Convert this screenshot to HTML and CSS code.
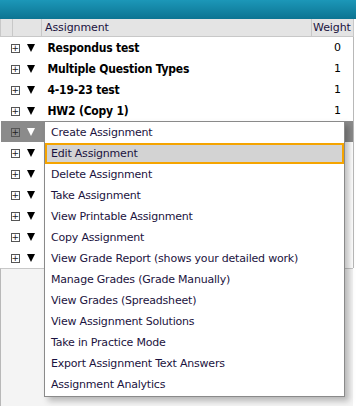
FILE: index.html
```html
<!DOCTYPE html>
<html lang="en">
<head>
    <title>Assignments</title>
    <link rel="stylesheet" href="styles.css">
</head>
<body>
    <div class="panel">
        <div class="titlebar"></div>
        <table class="grid">
            <colgroup>
                <col class="w1">
                <col class="w2">
                <col>
                <col class="w4">
            </colgroup>
            <tr class="head">
                <th></th>
                <th></th>
                <th class="c3">Assignment</th>
                <th class="c4">Weight</th>
            </tr>
            <tr>
                <td colspan="2" class="icons"><span class="plus">+</span><span class="tri"></span></td>
                <td class="name">Respondus test</td>
                <td class="num">0</td>
            </tr>
            <tr>
                <td colspan="2" class="icons"><span class="plus">+</span><span class="tri"></span></td>
                <td class="name">Multiple Question Types</td>
                <td class="num">1</td>
            </tr>
            <tr>
                <td colspan="2" class="icons"><span class="plus">+</span><span class="tri"></span></td>
                <td class="name">4-19-23 test</td>
                <td class="num">1</td>
            </tr>
            <tr>
                <td colspan="2" class="icons"><span class="plus">+</span><span class="tri"></span></td>
                <td class="name">HW2 (Copy 1)</td>
                <td class="num">1</td>
            </tr>
            <tr class="active">
                <td colspan="2" class="icons"><span class="plus">+</span><span class="tri"></span></td>
                <td class="name"></td>
                <td class="num"></td>
            </tr>
            <tr><td colspan="2" class="icons"><span class="plus">+</span><span class="tri"></span></td><td></td><td></td></tr>
            <tr><td colspan="2" class="icons"><span class="plus">+</span><span class="tri"></span></td><td></td><td></td></tr>
            <tr><td colspan="2" class="icons"><span class="plus">+</span><span class="tri"></span></td><td></td><td></td></tr>
            <tr><td colspan="2" class="icons"><span class="plus">+</span><span class="tri"></span></td><td></td><td></td></tr>
            <tr><td colspan="2" class="icons"><span class="plus">+</span><span class="tri"></span></td><td></td><td></td></tr>
            <tr><td colspan="2" class="icons"><span class="plus">+</span><span class="tri"></span></td><td></td><td></td></tr>
        </table>
        <div class="filler"></div>

        <ul class="menu">
            <li>Create Assignment</li>
            <li class="selected">Edit Assignment</li>
            <li>Delete Assignment</li>
            <li>Take Assignment</li>
            <li>View Printable Assignment</li>
            <li>Copy Assignment</li>
            <li>View Grade Report (shows your detailed work)</li>
            <li>Manage Grades (Grade Manually)</li>
            <li>View Grades (Spreadsheet)</li>
            <li>View Assignment Solutions</li>
            <li>Take in Practice Mode</li>
            <li>Export Assignment Text Answers</li>
            <li>Assignment Analytics</li>
        </ul>
    </div>
</body>
</html>
```
FILE: styles.css
```css
body {
    margin: 0;
    background: #fff;
    font-family: Tahoma, "DejaVu Sans", sans-serif;
    font-size: 11px;
    color: #000;
}
.panel {
    position: relative;
    width: 356px;
    height: 406px;
    overflow: hidden;
}
.titlebar {
    height: 19px;
    background: linear-gradient(#1c97b8, #0c7492);
}
.grid {
    border-collapse: collapse;
    table-layout: fixed;
    width: 354px;
    border-right: 1px solid #b8b8b8;
}
.w1 {
    width: 12px;
}
.w2 {
    width: 29px;
}
.w4 {
    width: 42px;
}
.grid td, .grid th {
    padding: 0;
    height: 21px;
    white-space: nowrap;
    overflow: hidden;
}
.head th {
    height: 17px;
    background: #e4e4e4;
    border: 1px solid #c8c8c8;
    border-top: none;
    font-weight: normal;
    text-align: left;
    color: #1b1340;
    font-size: 11px;
    letter-spacing: -0.1px;
}
.head .c3 {
    padding-left: 3px;
}
.head .c4 {
    padding-left: 1px;
}
.icons {
    padding-left: 10px !important;
}
.plus {
    display: inline-block;
    box-sizing: border-box;
    width: 9px;
    height: 9px;
    border: 1px solid #555;
    font-size: 9px;
    line-height: 7px;
    text-align: center;
    vertical-align: middle;
    color: #222;
    font-family: "DejaVu Sans", sans-serif;
}
.tri {
    display: inline-block;
    width: 0;
    height: 0;
    margin-left: 7px;
    border-left: 4px solid transparent;
    border-right: 4px solid transparent;
    border-top: 8px solid #000;
    vertical-align: middle;
}
.name {
    font-family: "DejaVu Sans Condensed", "Liberation Sans", sans-serif;
    font-weight: bold;
    font-size: 12px;
    letter-spacing: -0.2px;
    padding-left: 6px !important;
}
.num {
    text-align: right;
    padding-right: 12px !important;
    font-size: 11px;
}
.active td {
    background: #8b8b8b;
}
.active .tri {
    border-top-color: #fff;
}
.filler {
    height: 140px;
    background: #f4f4f4;
    border-left: 1px solid #b8b8b8;
    border-top: 1px solid #c8c8c8;
    width: 352px;
}
.menu {
    position: absolute;
    left: 44px;
    top: 121px;
    width: 299px;
    margin: 0;
    padding: 0 0 1px 0;
    list-style: none;
    background: #fff;
    border: 1px solid #8a8a8a;
    box-shadow: 4px 4px 6px rgba(0, 0, 0, 0.25);
    font-size: 11px;
    letter-spacing: -0.2px;
    color: #1b1340;
}
.menu li {
    height: 21px;
    line-height: 21px;
    padding-left: 6px;
    box-sizing: border-box;
}
.menu .selected {
    background: #d3d3d3;
    border: 2px solid #f5a400;
    line-height: 17px;
    padding-left: 4px;
}
```
